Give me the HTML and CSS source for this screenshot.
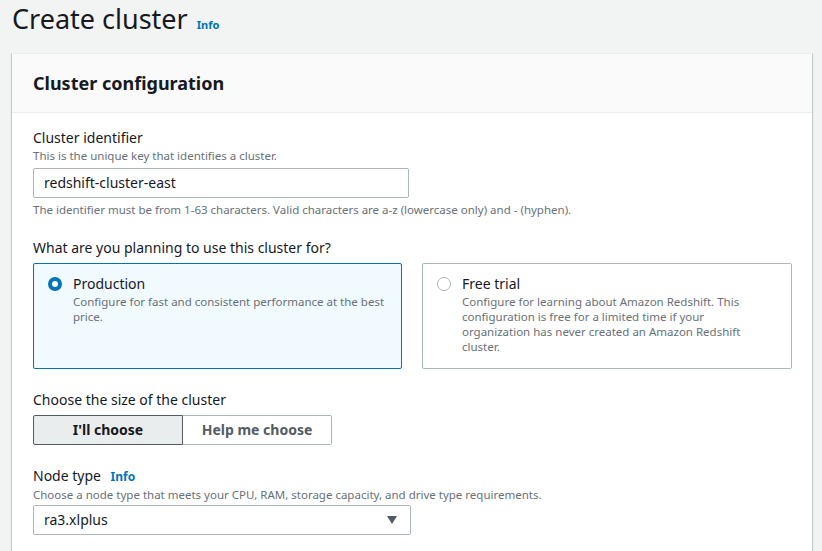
FILE: index.html
```html
<!DOCTYPE html>
<html lang="en">
<head>
<meta charset="utf-8">
<title>Create cluster</title>
<link rel="stylesheet" href="styles.css">
</head>
<body>
<div class="page">
  <div class="page-header">
    <h1 class="page-title">Create cluster</h1>
    <a class="info-link" href="#">Info</a>
  </div>

  <section class="card">
    <div class="card-header">
      <h2 class="card-title">Cluster configuration</h2>
    </div>
    <div class="card-body">
      <div class="field">
        <div class="label">Cluster identifier</div>
        <div class="desc">This is the unique key that identifies a cluster.</div>
        <div class="input">redshift-cluster-east</div>
        <div class="hint">The identifier must be from 1-63 characters. Valid characters are a-z (lowercase only) and - (hyphen).</div>
      </div>

      <div class="field field-usage">
        <div class="label">What are you planning to use this cluster for?</div>
        <div class="tiles">
          <div class="tile tile-selected">
            <span class="radio radio-on"></span>
            <div class="tile-text">
              <div class="tile-title">Production</div>
              <div class="tile-desc">Configure for fast and consistent performance at the best price.</div>
            </div>
          </div>
          <div class="tile">
            <span class="radio"></span>
            <div class="tile-text">
              <div class="tile-title">Free trial</div>
              <div class="tile-desc tile-desc-narrow">Configure for learning about Amazon Redshift. This configuration is free for a limited time if your organization has never created an Amazon Redshift cluster.</div>
            </div>
          </div>
        </div>
      </div>

      <div class="field field-size">
        <div class="label">Choose the size of the cluster</div>
        <div class="segmented">
          <div class="seg seg-active">I'll choose</div>
          <div class="seg">Help me choose</div>
        </div>
      </div>

      <div class="field field-node">
        <div class="label">Node type <a class="info-link small" href="#">Info</a></div>
        <div class="desc desc-tight">Choose a node type that meets your CPU, RAM, storage capacity, and drive type requirements.</div>
        <div class="select">
          <span>ra3.xlplus</span>
          <svg class="caret" width="12" height="10" viewBox="0 0 12 10"><polygon points="1,1 11,1 6,9" fill="#545b64"/></svg>
        </div>
      </div>
    </div>
  </section>
</div>
</body>
</html>
```

FILE: styles.css
```css
* { box-sizing: border-box; }
html, body { margin: 0; padding: 0; }
body {
  background: #f2f3f3;
  font-family: "Noto Sans", "Open Sans", Arial, sans-serif;
  color: #16191f;
  overflow: hidden;
}
.page {
  padding: 0 10px 0 12px;
}
.page-header {
  display: flex;
  align-items: baseline;
  gap: 9px;
  height: 53px;
}
.page-title {
  margin: 0;
  font-size: 27px;
  font-weight: 400;
  line-height: 37px;
  color: #16191f;
}
.info-link {
  color: #0073bb;
  font-weight: 700;
  font-size: 11px;
  text-decoration: none;
}
.info-link.small { font-size: 12px; margin-left: 6px; }
.card {
  background: #fff;
  box-shadow: 0 1px 1px 0 rgba(0,28,36,.3), 1px 1px 1px 0 rgba(0,28,36,.15), -1px 1px 1px 0 rgba(0,28,36,.15);
  border-top: 1px solid #eaeded;
  min-height: 600px;
}
.card-header {
  background: #fafafa;
  height: 59px;
  border-bottom: 1px solid #eaeded;
  padding: 0 20px 0 21px;
  display: flex;
  align-items: center;
}
.card-title {
  margin: 0;
  font-size: 18px;
  font-weight: 700;
  line-height: 22px;
}
.card-body {
  padding: 15px 20px 20px 21px;
}
.label {
  font-size: 14px;
  line-height: 20px;
  color: #16191f;
}
.desc {
  font-size: 11.5px;
  line-height: 16px;
  color: #687078;
}
.desc-tight { line-height: 15px; }
.hint {
  font-size: 11.5px;
  line-height: 16px;
  color: #687078;
  margin-top: 4px;
}
.input, .select {
  width: 376px;
  height: 30px;
  margin-top: 4px;
  border: 1px solid #aab7b8;
  border-radius: 2px;
  padding: 0 10px;
  font-size: 14px;
  line-height: 28px;
  color: #16191f;
  background: #fff;
}
.select {
  width: 378px;
  margin-top: 3px;
  display: flex;
  align-items: center;
  justify-content: space-between;
  padding-right: 12px;
}
.caret { display: block; }
.field-usage { margin-top: 20px; }
.field-size { margin-top: 21px; }
.field-node { margin-top: 21px; }
.tiles {
  display: grid;
  grid-template-columns: 369px 370px;
  gap: 20px;
  margin-top: 5px;
}
.tile {
  display: flex;
  gap: 11px;
  border: 1px solid #aab7b8;
  border-radius: 2px;
  padding: 10px 14px 14px 14px;
  background: #fff;
}
.tile-selected {
  border-color: #0073bb;
  background: #f1faff;
}
.radio {
  flex: none;
  width: 14px;
  height: 14px;
  margin-top: 3px;
  border-radius: 50%;
  border: 1px solid #aab7b8;
  background: #fff;
}
.radio-on {
  border: 4px solid #0073bb;
}
.tile-title {
  font-size: 14px;
  line-height: 20px;
  color: #16191f;
}
.tile-desc {
  font-size: 11.5px;
  line-height: 15px;
  color: #687078;
}
.tile-desc-narrow {
  max-width: 310px;
}
.segmented {
  display: flex;
  margin-top: 5px;
}
.seg {
  width: 149px;
  height: 30px;
  border: 1px solid #aab7b8;
  border-left: none;
  border-radius: 0 2px 2px 0;
  font-size: 14px;
  font-weight: 700;
  line-height: 28px;
  text-align: center;
  color: #545b64;
  background: #fff;
}
.seg-active {
  width: 150px;
  border: 1px solid #545b64;
  border-radius: 2px 0 0 2px;
  background: #eaeded;
  color: #16191f;
}
```
